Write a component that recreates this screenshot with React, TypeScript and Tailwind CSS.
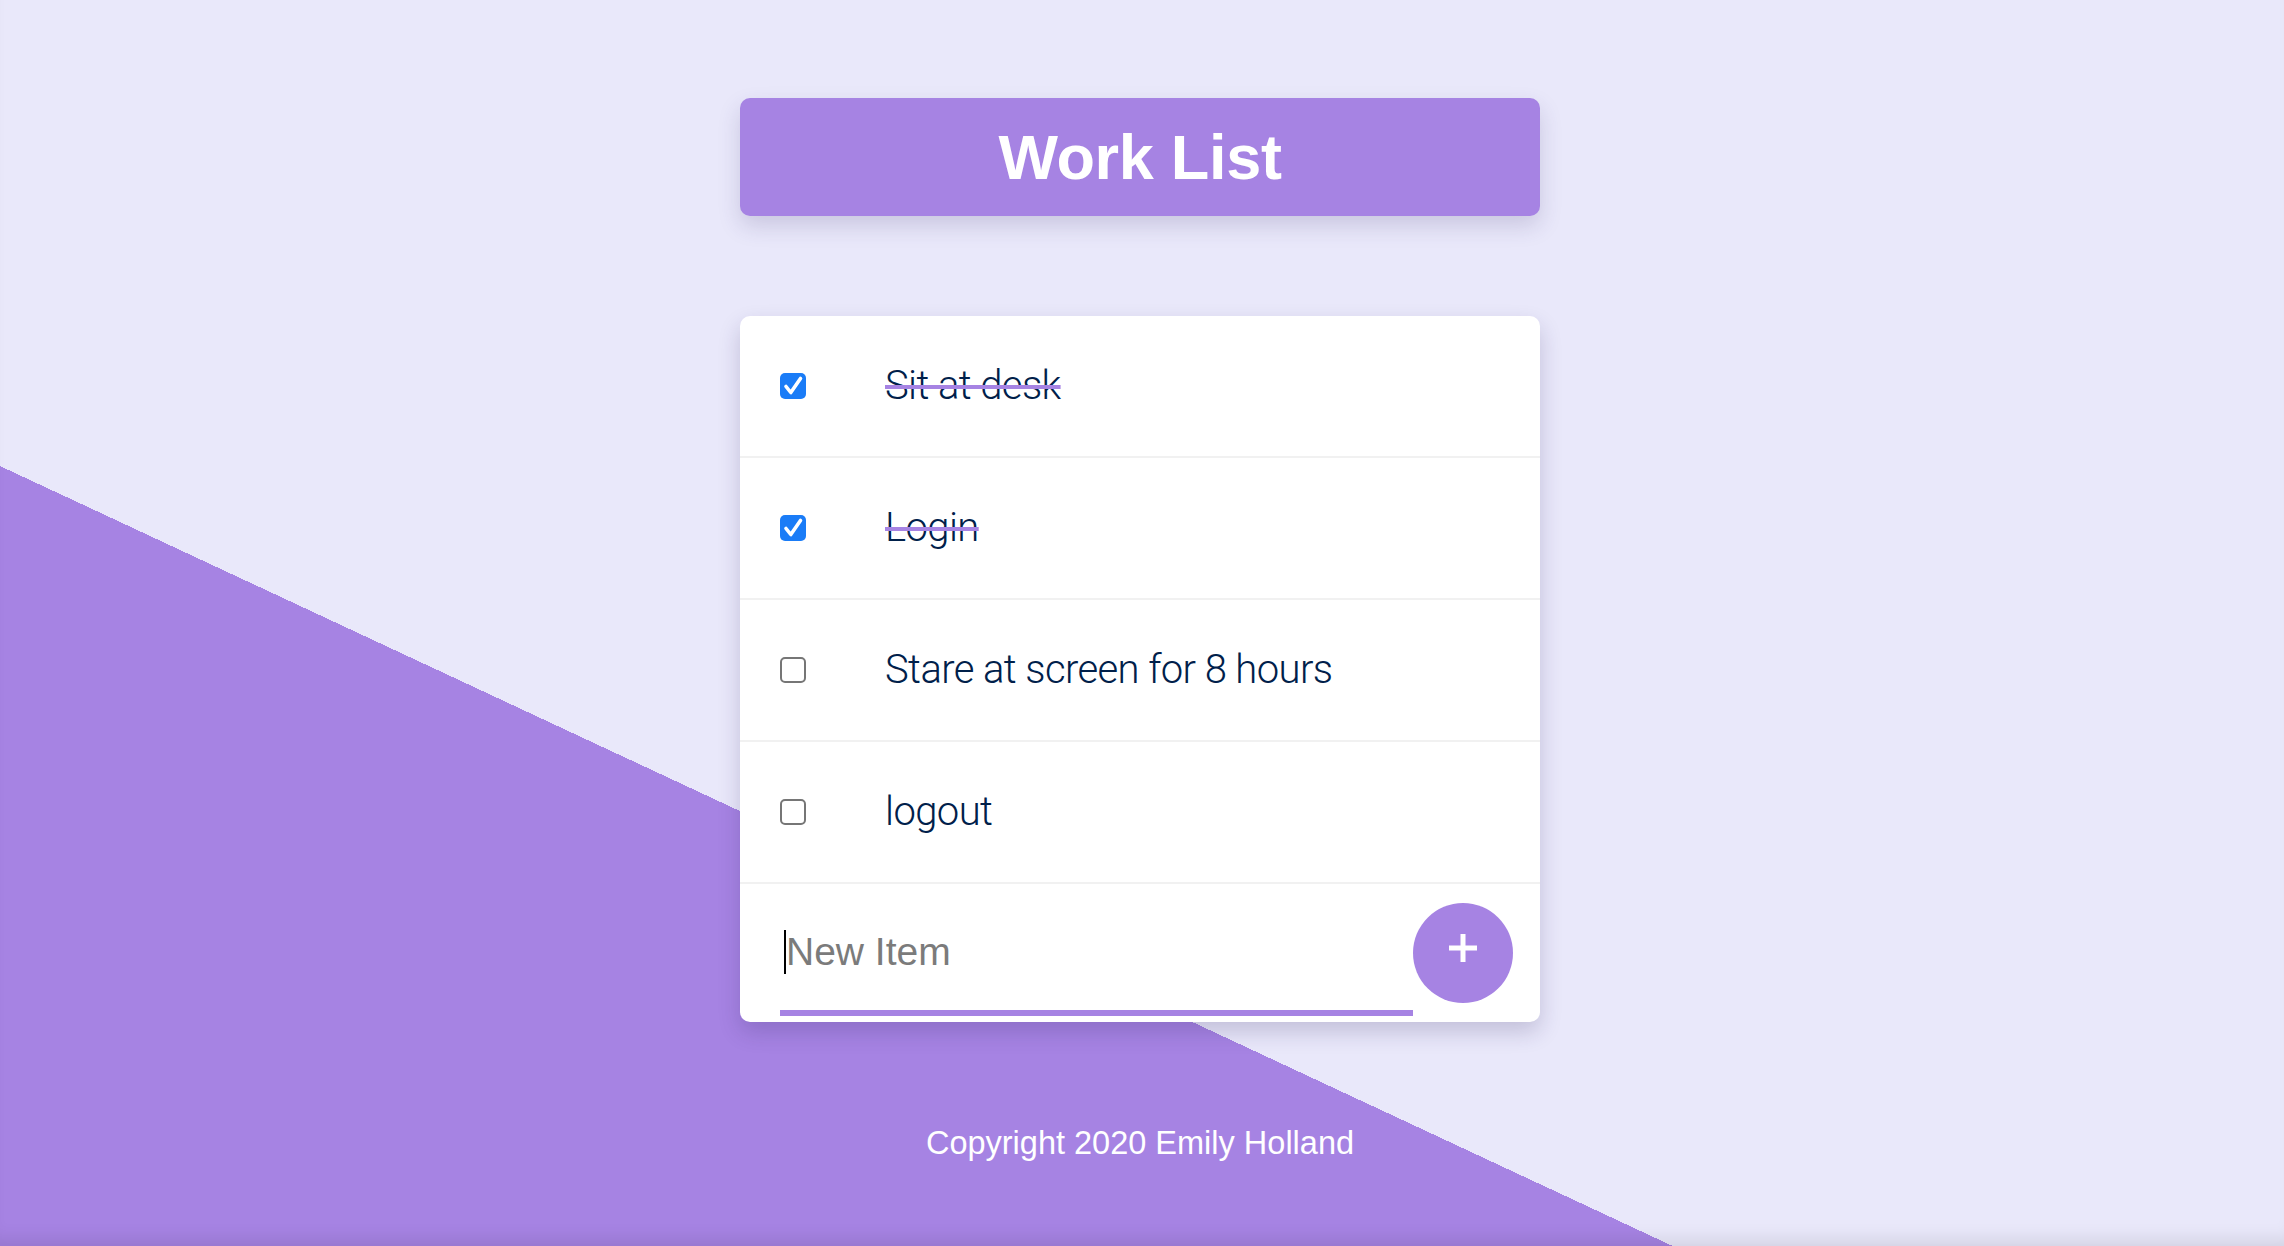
import { useState } from "react";

type Item = { id: number; text: string; done: boolean };

const START: Item[] = [
  { id: 1, text: "Sit at desk", done: true },
  { id: 2, text: "Login", done: true },
  { id: 3, text: "Stare at screen for 8 hours", done: false },
  { id: 4, text: "logout", done: false },
];

function Box({ on, onClick }: { on: boolean; onClick: () => void }) {
  return (
    <button onClick={onClick}
      className={on
        ? "ml-[40px] w-[26px] h-[26px] shrink-0 rounded-[5px] bg-[#1a7cf7] flex items-center justify-center"
        : "ml-[40px] w-[26px] h-[26px] shrink-0 rounded-[5px] bg-white border-2 border-[#767676]"}>
      {on && (
        <svg width="26" height="26" viewBox="0 0 26 26" fill="none">
          <path d="M6 13.5 L10.8 19.5 L20.5 5.5" stroke="white" strokeWidth="3.6" strokeLinecap="round" strokeLinejoin="round" />
        </svg>
      )}
    </button>
  );
}

export default function App() {
  const [items, setItems] = useState<Item[]>(START);
  const [draft, setDraft] = useState("");

  const toggle = (id: number) =>
    setItems(xs => xs.map(x => (x.id === id ? { ...x, done: !x.done } : x)));

  const add = () => {
    if (!draft.trim()) return;
    setItems(xs => [...xs, { id: Date.now(), text: draft.trim(), done: false }]);
    setDraft("");
  };

  return (
    <div className="h-screen overflow-hidden w-full pr-[4px] flex flex-col items-center bg-[linear-gradient(25deg,#A683E3_33.75%,#E9E8FA_33.75%)] shadow-[inset_0_-18px_18px_-12px_rgba(0,0,0,0.1)] font-['Liberation_Sans',Arial,sans-serif]">
      <div className="mt-[98px] w-[800px] h-[118px] rounded-[10px] bg-[#A683E3] flex items-center justify-center shadow-[0_10px_22px_rgba(60,50,110,0.18)]">
        <h1 className="text-white font-bold text-[63px] leading-none tracking-[-0.3px]">Work List</h1>
      </div>

      <div className="mt-[100px] w-[800px] rounded-[10px] bg-white overflow-hidden shadow-[0_10px_22px_rgba(40,30,90,0.2)]">
        {items.map(it => (
          <div key={it.id} className="h-[142px] flex items-center border-b-2 border-[#f1f1f1]">
            <Box on={it.done} onClick={() => toggle(it.id)} />
            <p className={
              it.done
                ? "ml-[79px] text-[40px] leading-none font-['Roboto',sans-serif] font-light tracking-[-0.6px] text-[#00204a] line-through decoration-[#A683E3] decoration-4"
                : "ml-[79px] text-[40px] leading-none font-['Roboto',sans-serif] font-light tracking-[-0.6px] text-[#00204a]"
            }>
              {it.text}
            </p>
          </div>
        ))}

        <div className="h-[138px] flex items-center pl-[40px] pr-[27px]">
          <div className="flex-1 self-end mb-[6px] h-[122px] flex items-center border-b-[6px] border-[#A683E3]">
            <span className="ml-[4px] w-[2px] h-[44px] bg-black shrink-0" />
            <input value={draft} onChange={e => setDraft(e.target.value)}
              onKeyDown={e => { if (e.key === "Enter") add(); }}
              placeholder="New Item"
              className="flex-1 min-w-0 bg-transparent outline-none text-[39px] leading-none text-[#00204a] placeholder:text-[#7b7b7b]" />
          </div>
          <button onClick={add}
            className="w-[100px] h-[100px] shrink-0 rounded-full bg-[#A683E3] flex items-center justify-center">
            <svg width="32" height="32" viewBox="0 0 32 32" className="-mt-[10px]">
              <path d="M16 2 V30 M2 16 H30" stroke="white" strokeWidth="5" />
            </svg>
          </button>
        </div>
      </div>

      <footer className="mt-[105px] text-white text-[32.5px] leading-none">Copyright 2020 Emily Holland</footer>
    </div>
  );
}
